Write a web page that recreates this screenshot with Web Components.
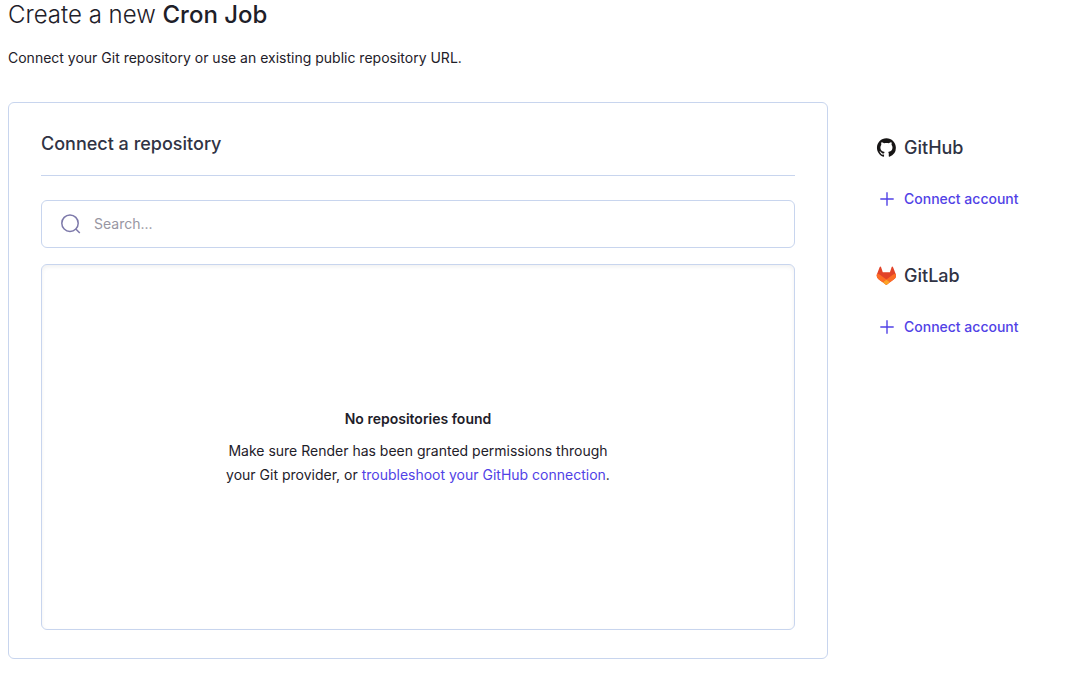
<!DOCTYPE html>
<html lang="en">
<head>
<meta charset="utf-8">
<meta name="viewport" content="width=device-width, initial-scale=1">
<title>Create a new Cron Job</title>
<style>
  body {
    margin: 0;
    background: #fff;
    color: #1e2029;
    font-family: Inter, "Liberation Sans", sans-serif;
    font-size: 14px;
    line-height: 24px;
    --line: #c8d5ee;
    --accent: #5142e6;
    --heading: #303344;
  }
</style>
</head>
<body>
<cron-job-page></cron-job-page>

<script>
  class BaseElement extends HTMLElement {
    constructor() {
      super();
      const root = this.attachShadow({ mode: "open" });
      root.innerHTML = "<style>*{box-sizing:border-box}h1,h2,h3,p{margin:0}a{color:var(--accent);text-decoration:none}</style>" + this.constructor.markup;
    }
  }

  customElements.define("page-header", class extends BaseElement {
    static markup = `
      <style>
        :host { display: block; }
        h1 { font-size: 24px; line-height: 30px; font-weight: 300; }
        p { margin-top: 16px; }
      </style>
      <h1><slot name="title"></slot></h1>
      <p><slot></slot></p>`;
  });

  customElements.define("section-card", class extends BaseElement {
    static markup = `
      <style>
        :host { display: block; box-sizing: border-box; border: 1px solid var(--line); border-radius: 6px; padding: 28px 32px; }
        h2 { padding-bottom: 18px; border-bottom: 1px solid var(--line); font-size: 18px; line-height: 26px; font-weight: 500; color: var(--heading); }
        .body { display: grid; gap: 16px; padding-top: 24px; }
      </style>
      <h2><slot name="title"></slot></h2>
      <div class="body"><slot></slot></div>`;
  });

  customElements.define("search-field", class extends BaseElement {
    static markup = `
      <style>
        :host { display: block; }
        label { display: flex; align-items: center; gap: 12px; height: 48px; padding: 0 18px; border: 1px solid var(--line); border-radius: 6px; }
        svg { flex: none; }
        input { flex: 1; min-width: 0; padding: 0; border: 0; outline: 0; background: none; color: inherit; font: inherit; }
        input::placeholder { color: #9896a2; opacity: 1; }
        label:focus-within { border-color: var(--accent); }
      </style>
      <label>
        <svg width="22" height="22" viewBox="0 0 22 22" fill="none" stroke="#7d79aa" stroke-width="1.5" aria-hidden="true"><circle cx="10" cy="10.2" r="8.2"/><path d="M15.8 16l4 4"/></svg>
        <input type="text" placeholder="Search..." aria-label="Search repositories">
      </label>`;
  });

  customElements.define("empty-state", class extends BaseElement {
    static markup = `
      <style>
        :host { display: flex; flex-direction: column; align-items: center; justify-content: center; gap: 8px; box-sizing: border-box; min-height: 366px; padding: 24px; border: 1px solid var(--line); border-radius: 6px; box-shadow: inset 0 2px 4px #0000000f; text-align: center; }
        h3 { font-size: 14px; line-height: 24px; font-weight: 600; }
      </style>
      <h3><slot name="title"></slot></h3>
      <p><slot></slot></p>`;
  });

  customElements.define("git-provider", class extends BaseElement {
    static markup = `
      <style>
        :host { display: grid; gap: 26px; }
        h2, a { display: flex; align-items: center; gap: 8px; font-weight: 500; }
        h2 { font-size: 18px; line-height: 27px; color: var(--heading); }
        a { line-height: 24px; }
        ::slotted(svg), svg { flex: none; display: block; }
      </style>
      <h2><slot name="logo"></slot><slot></slot></h2>
      <a href="#connect">
        <svg width="20" height="20" viewBox="0 0 20 20" stroke="currentColor" stroke-width="1.4" aria-hidden="true"><path d="M11 3.3v13.4M4.3 10h13.4"/></svg>
        <span>Connect account</span>
      </a>`;
  });

  customElements.define("cron-job-page", class extends BaseElement {
    static markup = `
      <style>
        :host { display: block; padding: 0 8px 16px; }
        strong { font-weight: 500; }
        main { display: grid; grid-template-columns: minmax(0, 1fr) 185px; gap: 48px; margin-top: 32px; }
        aside { display: grid; align-content: start; gap: 51px; padding-top: 32px; }
      </style>
      <page-header>
        <span slot="title">Create a new </span><strong slot="title">Cron Job</strong>
        Connect your Git repository or use an existing public repository URL.
      </page-header>
      <main>
        <section-card>
          <span slot="title">Connect a repository</span>
          <search-field></search-field>
          <empty-state>
            <span slot="title">No repositories found</span>
            Make sure Render has been granted permissions through<br>
            your Git provider, or <a href="#troubleshoot">troubleshoot your GitHub connection</a>.
          </empty-state>
        </section-card>
        <aside>
          <git-provider>
            <svg slot="logo" width="20" height="20" viewBox="-0.8 -0.3 16.9 16.9" fill="#171515" aria-hidden="true"><path d="M8 0C3.58 0 0 3.58 0 8c0 3.54 2.29 6.53 5.47 7.59.4.07.55-.17.55-.38 0-.19-.01-.82-.01-1.49-2.01.37-2.53-.49-2.69-.94-.09-.23-.48-.94-.82-1.13-.28-.15-.68-.52-.01-.53.63-.01 1.08.58 1.23.82.72 1.21 1.87.87 2.33.66.07-.52.28-.87.51-1.07-1.78-.2-3.64-.89-3.64-3.95 0-.87.31-1.59.82-2.15-.08-.2-.36-1.02.08-2.12 0 0 .67-.21 2.2.82.64-.18 1.32-.27 2-.27s1.36.09 2 .27c1.53-1.04 2.2-.82 2.2-.82.44 1.1.16 1.92.08 2.12.51.56.82 1.27.82 2.15 0 3.07-1.87 3.75-3.65 3.95.29.25.54.73.54 1.48 0 1.07-.01 1.93-.01 2.2 0 .21.15.46.55.38A8.01 8.01 0 0016 8c0-4.42-3.58-8-8-8z"/></svg>
            GitHub
          </git-provider>
          <git-provider>
            <svg slot="logo" width="20" height="20" viewBox="-1 -0.6 26 26" aria-hidden="true">
              <path fill="#e24329" d="M24.507 9.5l-.034-.09L21.082.562a.896.896 0 00-1.694.091l-2.29 7.01H7.825L5.535.653a.898.898 0 00-1.694-.09L.451 9.411.416 9.5a6.297 6.297 0 002.09 7.278l.012.01.03.022 5.16 3.867 2.56 1.935 1.554 1.176a1.051 1.051 0 001.268 0l1.555-1.176 2.56-1.935 5.197-3.89.014-.01A6.297 6.297 0 0024.507 9.5z"/>
              <path fill="#fc6d26" d="M24.507 9.5l-.034-.09a11.44 11.44 0 00-4.56 2.051l-7.447 5.632 4.742 3.584 5.197-3.89.014-.01A6.297 6.297 0 0024.507 9.5z"/>
              <path fill="#fca326" d="M7.707 20.677l2.56 1.935 1.555 1.176a1.051 1.051 0 001.268 0l1.555-1.176 2.56-1.935-4.743-3.584-4.755 3.584z"/>
              <path fill="#fc6d26" d="M5.01 11.461a11.43 11.43 0 00-4.56-2.05L.416 9.5a6.297 6.297 0 002.09 7.278l.012.01.03.022 5.16 3.867 4.745-3.584-7.444-5.632z"/>
            </svg>
            GitLab
          </git-provider>
        </aside>
      </main>`;
  });
</script>
</body>
</html>
